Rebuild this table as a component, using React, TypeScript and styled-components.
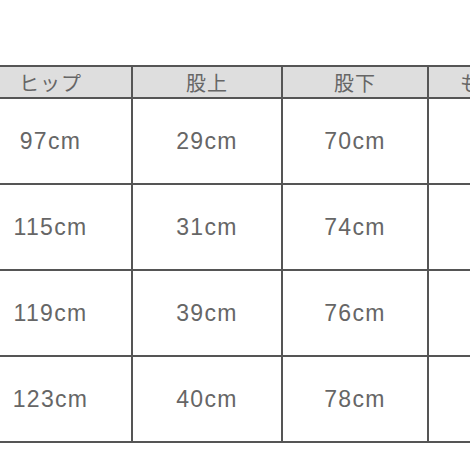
import styled, { createGlobalStyle } from "styled-components";

const GlobalStyle = createGlobalStyle`
  html, body {
    margin: 0;
    padding: 0;
    background: #fff;
  }
`;

const Page = styled.div`
  width: 470px;
  height: 470px;
  overflow: hidden;
  padding-top: 65px;
  box-sizing: border-box;
  font-family: "Liberation Sans", "Noto Sans CJK JP", sans-serif;
`;

const Table = styled.table`
  border-collapse: collapse;
  table-layout: fixed;
  margin-left: -32px;
  width: 607px;
`;

const HeadCell = styled.th`
  height: 30px;
  padding: 0;
  border: 2px solid #555;
  background: #dedede;
  color: #666;
  font-size: 20px;
  font-weight: normal;
  letter-spacing: 1px;
  text-align: center;
  vertical-align: middle;
`;

const Cell = styled.td`
  height: 84px;
  padding: 0;
  border: 2px solid #555;
  color: #666;
  font-size: 23px;
  letter-spacing: 1.3px;
  text-align: center;
  vertical-align: middle;
`;

const columns = [
  { label: "ヒップ", width: 163 },
  { label: "股上", width: 150 },
  { label: "股下", width: 146 },
  { label: "もも周り", width: 148 },
];

const rows = [
  ["97cm", "29cm", "70cm", "58cm"],
  ["115cm", "31cm", "74cm", "64cm"],
  ["119cm", "39cm", "76cm", "66cm"],
  ["123cm", "40cm", "78cm", "68cm"],
];

export default function App() {
  return (
    <>
      <GlobalStyle />
      <Page>
        <Table>
          <colgroup>
            {columns.map((c) => (
              <col key={c.label} style={{ width: c.width }} />
            ))}
          </colgroup>
          <thead>
            <tr>
              {columns.map((c) => (
                <HeadCell key={c.label}>{c.label}</HeadCell>
              ))}
            </tr>
          </thead>
          <tbody>
            {rows.map((r, i) => (
              <tr key={i}>
                {r.map((v, j) => (
                  <Cell key={j}>{v}</Cell>
                ))}
              </tr>
            ))}
          </tbody>
        </Table>
      </Page>
    </>
  );
}
